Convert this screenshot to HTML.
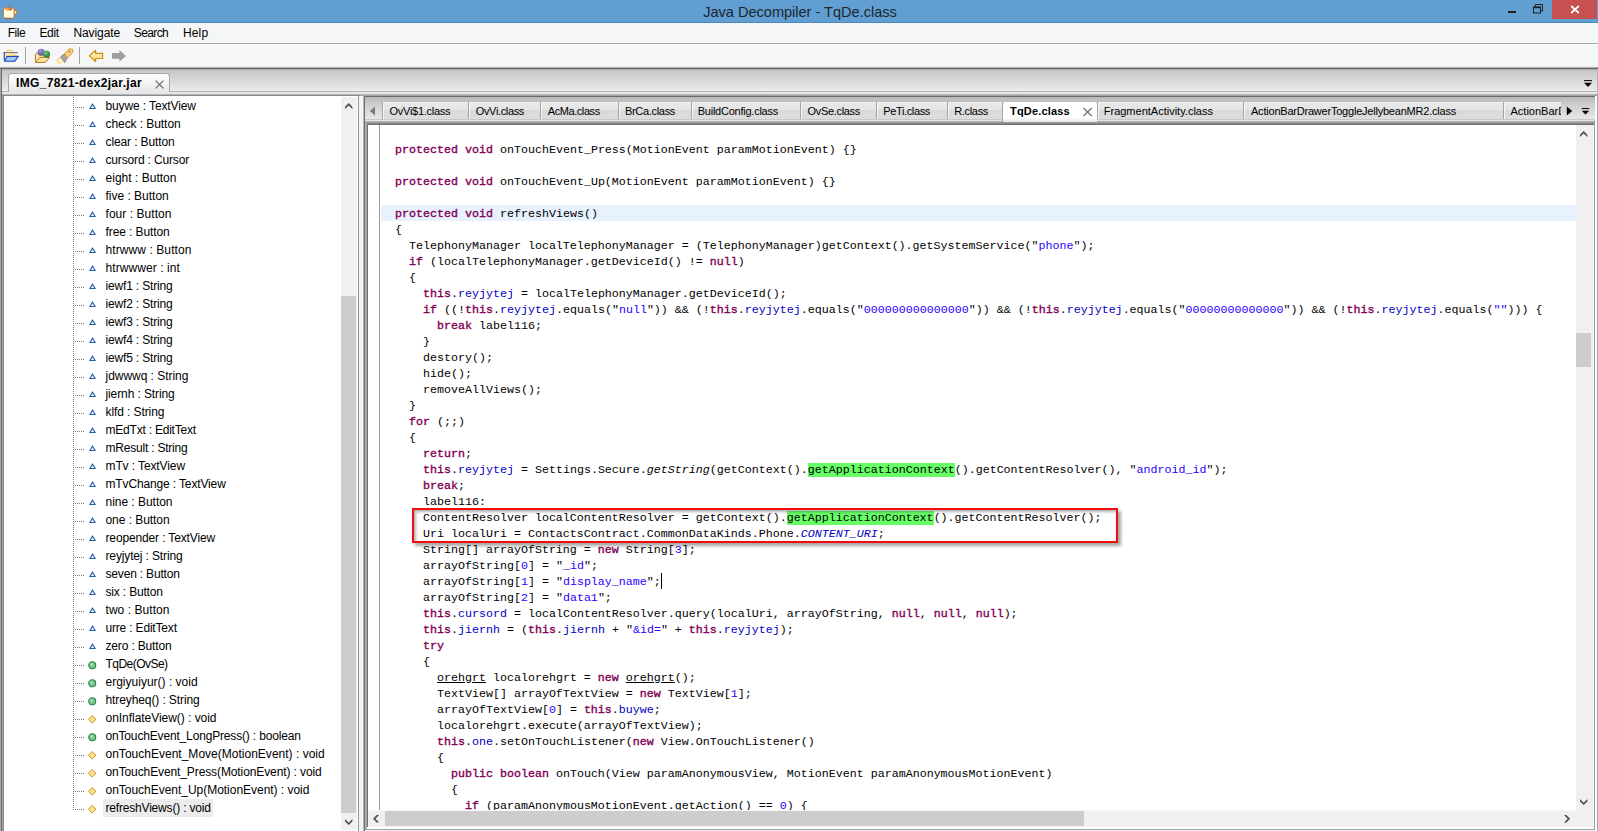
<!DOCTYPE html>
<html><head><meta charset="utf-8"><title>Java Decompiler - TqDe.class</title>
<style>
html,body{margin:0;padding:0;}
body{width:1598px;height:831px;overflow:hidden;position:relative;background:#f0f0f0;font-family:'Liberation Sans',sans-serif;}
.b{position:absolute;}
.t{position:absolute;white-space:pre;}
svg{position:absolute;overflow:visible;}
.code{position:absolute;left:381px;top:126px;width:1195px;height:684px;overflow:hidden;font:11.675px/16px 'Liberation Mono',monospace;color:#000;white-space:pre;}
.code div{height:16px;}
.k{color:#7f0055;-webkit-text-stroke:0.35px #7f0055;}
.f{color:#0000c0;}
.s{color:#2a00ff;}
.i{font-style:italic;}
.fi{color:#0000c0;font-style:italic;}
.u{text-decoration:underline;}
.g{background:#66ff66;}

</style></head>
<body>
<div class="b" style="left:0px;top:0px;width:1598px;height:23px;background:#619ed1;"></div>
<div class="b" style="left:0px;top:22px;width:1598px;height:1px;background:#4f88bd;"></div>
<svg style="left:0px;top:0px" width="24" height="24" viewBox="0 0 24 24">
<path d="M8.8 8 L7.3 6.3" stroke="#7c7c7c" stroke-width="1.1" fill="none"/>
<path d="M9.2 7.8 L11.4 4.6" stroke="#808080" stroke-width="1.5" fill="none"/>
<path d="M14 10.4 h1.4 q1.7 0 1.7 1.7 q0 1.6 -3.2 3.4 z" fill="#fff8e4" stroke="#b87a2a" stroke-width="1.1"/>
<path d="M3.5 9.2 q0 -1 1 -1 h8.6 q1 0 1 1 v6.8 q0 2.5 -2.4 2.5 h-5.8 q-2.4 0 -2.4 -2.5 z" fill="#fffbe2" stroke="#c08434" stroke-width="1"/>
<path d="M5 18.3 h7" stroke="#9a5c18" stroke-width="1"/>
<defs><linearGradient id="tea" x1="0" x2="1"><stop offset="0" stop-color="#f8c050"/><stop offset=".45" stop-color="#f49a3c"/><stop offset=".8" stop-color="#e8503a"/><stop offset="1" stop-color="#f0a060"/></linearGradient></defs>
<path d="M4.8 8.6 h7.6 v1.4 q-3.8 1.6 -7.6 0 z" fill="url(#tea)"/>
</svg>
<span class="t" style="left:703.20px;top:0.54px;font:14.6px 'Liberation Sans', sans-serif;line-height:22px;color:#1c2630;letter-spacing:-0.028px;">Java Decompiler - TqDe.class</span>
<div class="b" style="left:1508px;top:11px;width:8px;height:2px;background:#1e1e1e;"></div>
<svg style="left:1532px;top:3px" width="12" height="12" viewBox="0 0 12 12">
<path d="M3.5 3.5 v-2 h7 v6.5 h-2" fill="none" stroke="#1e1e1e" stroke-width="1"/>
<rect x="1.5" y="4" width="7" height="6" fill="none" stroke="#1e1e1e" stroke-width="1"/><path d="M1 4.5 h8" stroke="#1e1e1e" stroke-width="1.4"/></svg>
<div class="b" style="left:1552px;top:0px;width:45px;height:19px;background:#c75050;"></div>
<svg style="left:1570px;top:5px" width="10" height="9" viewBox="0 0 10 9"><path d="M1.2 1 L8.8 8 M8.8 1 L1.2 8" stroke="#fff" stroke-width="1.7" fill="none"/></svg>
<div class="b" style="left:0px;top:23px;width:1598px;height:20px;background:#f5f6f7;"></div>
<span class="t" style="left:7.70px;top:24.04px;font:12px 'Liberation Sans', sans-serif;line-height:18px;color:#000;letter-spacing:-0.461px;">File</span>
<span class="t" style="left:39.40px;top:24.04px;font:12px 'Liberation Sans', sans-serif;line-height:18px;color:#000;letter-spacing:-0.322px;">Edit</span>
<span class="t" style="left:73.50px;top:24.04px;font:12px 'Liberation Sans', sans-serif;line-height:18px;color:#000;letter-spacing:-0.109px;">Navigate</span>
<span class="t" style="left:133.80px;top:24.04px;font:12px 'Liberation Sans', sans-serif;line-height:18px;color:#000;letter-spacing:-0.605px;">Search</span>
<span class="t" style="left:183.00px;top:24.04px;font:12px 'Liberation Sans', sans-serif;line-height:18px;color:#000;letter-spacing:0.128px;">Help</span>
<div class="b" style="left:0px;top:43px;width:1598px;height:1px;background:#a5a5a5;"></div>
<div class="b" style="left:0px;top:44px;width:1598px;height:1px;background:#ffffff;"></div>
<div class="b" style="left:0px;top:45px;width:1598px;height:22px;background:#f5f6f7;"></div>
<div class="b" style="left:0px;top:66px;width:1598px;height:1px;background:#ececec;"></div>
<div class="b" style="left:0px;top:67px;width:1598px;height:1px;background:#b0b0b0;"></div>
<div class="b" style="left:0px;top:68px;width:1598px;height:1px;background:#6a6a6a;"></div>
<div class="b" style="left:25px;top:47px;width:1px;height:17px;background:#a0a0a0;"></div>
<div class="b" style="left:79px;top:47px;width:1px;height:17px;background:#a0a0a0;"></div>
<svg style="left:0px;top:44px" width="140" height="24" viewBox="0 44 140 24">
<defs>
<linearGradient id="fy" x1="0" y1="0" x2="0" y2="1"><stop offset="0" stop-color="#fff0c0"/><stop offset="1" stop-color="#f8d070"/></linearGradient>
<linearGradient id="fb" x1="0" y1="0" x2="1" y2="1"><stop offset="0" stop-color="#c4e4fc"/><stop offset="1" stop-color="#78b0f0"/></linearGradient>
<radialGradient id="sp" cx=".4" cy=".3" r=".7"><stop offset="0" stop-color="#a898dc"/><stop offset="1" stop-color="#5a4a9c"/></radialGradient>
<radialGradient id="sg" cx=".4" cy=".3" r=".7"><stop offset="0" stop-color="#78c880"/><stop offset="1" stop-color="#1c7a30"/></radialGradient>
<linearGradient id="ar" x1="0" y1="0" x2="0" y2="1"><stop offset="0" stop-color="#fff8d8"/><stop offset="1" stop-color="#fbd468"/></linearGradient>
<linearGradient id="beam" x1="1" y1="0" x2="0" y2="1"><stop offset="0" stop-color="#fff6c0"/><stop offset=".5" stop-color="#fffbe0"/><stop offset="1" stop-color="#ffe878"/></linearGradient>
</defs>
<!-- folder -->
<path d="M6.5 52.5 L7.2 50.3 H11.6 L12.3 52.5 Z" fill="#fff4d0" stroke="#e8b860" stroke-width=".8"/>
<path d="M4.6 52.8 H16.6 V57 H4.6 Z" fill="url(#fy)"/>
<path d="M3.2 52.6 H17.8" stroke="#7a6a8a" stroke-width="1"/>
<path d="M4.3 53 V60.8" stroke="#2848b8" stroke-width="1.1"/>
<path d="M7 56.6 L18.4 56.2 L14.8 61.2 H4.6 Z" fill="url(#fb)" stroke="#2444b8" stroke-width="1.1" stroke-linejoin="round"/>
<!-- package with spheres -->
<path d="M35.4 54.6 L37.6 52.2 H46 L49.4 57.4 L45.4 62.4 H35.4 Z" fill="#fbe4a4" stroke="#b87420" stroke-width="1"/>
<path d="M36 61.8 L40 57.4 H49.2" fill="none" stroke="#b87420" stroke-width="1"/>
<circle cx="41.1" cy="52.3" r="3.5" fill="url(#sp)"/>
<circle cx="46.5" cy="54.1" r="3.5" fill="url(#sg)"/>
<!-- flashlight -->
<path d="M60.8 56.8 L64.6 62.8 L57 63 L56.9 60.8 Z" fill="url(#beam)"/>
<path d="M56.9 61 L60.8 56.8" stroke="#f4b838" stroke-width="1" fill="none"/>
<path d="M57 62.8 L61.5 62.7" stroke="#ffd84a" stroke-width="1" fill="none"/>
<path d="M60.5 57 L64.6 53.6 L67.4 57.8 L64.6 62.6 Z" fill="#a8a4b0" stroke="#907c58" stroke-width=".8" stroke-linejoin="round"/>
<path d="M64.6 53.6 L69 49 L72.6 49.2 L72.8 52.6 L67.4 57.8 Z" fill="#f8d478" stroke="#e09a20" stroke-width="1" stroke-linejoin="round"/>
<path d="M69 51.2 l.8 .8" stroke="#2a50c0" stroke-width="1.2"/>
<!-- arrows -->
<path d="M89.3 55.9 L95.6 50.3 V53.3 H102.6 V58.5 H95.6 V61.5 Z" fill="url(#ar)" stroke="#d48c10" stroke-width="1.2" stroke-linejoin="round"/>
<path d="M126 55.9 L119.4 50 V53 H112 V58.8 H119.4 V61.8 Z" fill="#9e9e9e"/>
</svg>
<div class="b" style="left:0px;top:69px;width:1598px;height:762px;background:#f0f0f0;"></div>
<div class="b" style="left:0px;top:69px;width:1px;height:762px;background:#a8a8a8;"></div>
<div class="b" style="left:1px;top:69px;width:1px;height:762px;background:#6a6a6a;"></div>
<div class="b" style="left:2px;top:69px;width:1595px;height:1px;background:#a8a8a8;"></div>
<div class="b" style="left:2px;top:70px;width:1595px;height:21px;background:linear-gradient(#c6c6c6,#ececec);"></div>
<div class="b" style="left:1597px;top:69px;width:1px;height:24px;background:#b0b0b0;"></div>
<div class="b" style="left:2px;top:91px;width:1596px;height:1px;background:#b4b4b4;"></div>
<div class="b" style="left:2px;top:92px;width:1596px;height:2px;background:#e6e6e6;"></div>
<div class="b" style="left:2px;top:94px;width:1596px;height:1px;background:#b6b6b6;"></div>
<div class="b" style="left:2px;top:95px;width:357px;height:1px;background:#858a94;"></div>
<div class="b" style="left:359px;top:95px;width:1238px;height:1px;background:#a2a2a2;"></div>
<div class="b" style="left:8px;top:73px;width:162px;height:19px;background:linear-gradient(#fdfdfd,#f3f3f3 55%,#e6e6e6);border:1px solid #a8a8a8;border-bottom:none;border-radius:4px 4px 0 0;box-sizing:border-box;"></div>
<span class="t" style="left:16.00px;top:73.84px;font:bold 12px 'Liberation Sans', sans-serif;line-height:18px;color:#000;letter-spacing:0.329px;">IMG_7821-dex2jar.jar</span>
<svg style="left:154px;top:78.7px" width="11" height="11" viewBox="0 0 11 11"><path d="M1.6 1.6 L9.4 9.4 M9.4 1.6 L1.6 9.4" stroke="#6a6a6a" stroke-width="1.25" fill="none"/></svg>
<svg style="left:1583px;top:80px" width="10" height="8" viewBox="0 0 10 8"><path d="M1 .6 h8" stroke="#000" stroke-width="1"/><path d="M1 2.8 h8 l-4 4.2z" fill="#000"/></svg>
<div class="b" style="left:2px;top:96px;width:1px;height:735px;background:#a2a2a2;"></div>
<div class="b" style="left:3px;top:96px;width:1px;height:735px;background:#878c96;"></div>
<div class="b" style="left:4px;top:96px;width:354px;height:735px;background:#ffffff;"></div>
<div class="b" style="left:341px;top:97px;width:16px;height:733px;background:#f0f0f0;"></div>
<div class="b" style="left:357px;top:96px;width:1px;height:735px;background:#ffffff;"></div>
<div class="b" style="left:341px;top:296px;width:15px;height:517px;background:#cdcdcd;"></div>
<div class="b" style="left:358px;top:96px;width:1px;height:735px;background:#8a93a0;"></div>
<div class="b" style="left:359px;top:96px;width:4px;height:735px;background:#f4f4f4;"></div>
<svg style="left:344.8px;top:103px" width="8" height="7" viewBox="0 0 8 7"><path d="M0 3.7 L3.7 0 L7.4 3.7 V6.1 L3.7 2.4 L0 6.1 Z" fill="#505050"/></svg>
<svg style="left:344.8px;top:819px" width="8" height="7" viewBox="0 0 8 7"><path d="M0 2.4 L3.7 6.1 L7.4 2.4 V0 L3.7 3.7 L0 0 Z" fill="#505050"/></svg>
<div class="b" style="left:363px;top:96px;width:1px;height:735px;background:#b8b8b8;"></div>
<div class="b" style="left:364px;top:96px;width:1px;height:735px;background:#707070;"></div>
<div class="b" style="left:364px;top:96px;width:1231px;height:1px;background:#6c6c6c;"></div>
<div class="b" style="left:365px;top:97px;width:1230px;height:23px;background:linear-gradient(#b8b8b8,#cfcfcf 35%,#e8e8e8);"></div>
<div class="b" style="left:1594px;top:120px;width:1px;height:711px;background:#a0a0a0;"></div>
<div class="b" style="left:1595px;top:96px;width:2px;height:735px;background:#fafafa;"></div>
<div class="b" style="left:1597px;top:93px;width:1px;height:738px;background:#a8a8a8;"></div>
<div class="b" style="left:365px;top:119px;width:1229px;height:1px;background:#c8c8c8;"></div>
<div class="b" style="left:365px;top:120px;width:1229px;height:1px;background:#e4e4e4;"></div>
<div class="b" style="left:365px;top:121px;width:1229px;height:1px;background:#b4b4b4;"></div>
<div class="b" style="left:365px;top:122px;width:1229px;height:1px;background:#9a9a9a;"></div>
<div class="b" style="left:365px;top:123px;width:1229px;height:1px;background:#888888;"></div>
<div class="b" style="left:365px;top:124px;width:1229px;height:1px;background:#707070;"></div>
<div class="b" style="left:365px;top:123px;width:2px;height:708px;background:#ababab;"></div>
<div class="b" style="left:367px;top:124px;width:1px;height:706px;background:#6e6e6e;"></div>
<div class="b" style="left:368px;top:125px;width:1208px;height:686px;background:#ffffff;"></div>
<div class="b" style="left:379px;top:125px;width:1px;height:685px;background:#9a9a9a;"></div>
<div class="b" style="left:1576px;top:125px;width:17px;height:702px;background:#f0f0f0;"></div>
<div class="b" style="left:368px;top:811px;width:1225px;height:16px;background:#f0f0f0;"></div>
<div class="b" style="left:368px;top:810px;width:1208px;height:1px;background:#f8f8f8;"></div>
<div class="b" style="left:1576px;top:333px;width:15px;height:34px;background:#cdcdcd;"></div>
<div class="b" style="left:385px;top:811px;width:699px;height:15px;background:#cdcdcd;"></div>
<div class="b" style="left:1593px;top:125px;width:1px;height:703px;background:#ffffff;"></div>
<div class="b" style="left:367px;top:827px;width:1227px;height:2px;background:#ffffff;"></div>
<div class="b" style="left:365px;top:829px;width:1230px;height:1px;background:#a0a0a0;"></div>
<div class="b" style="left:365px;top:830px;width:1230px;height:1px;background:#f0f0f0;"></div>
<svg style="left:1579.5px;top:130.8px" width="8" height="7" viewBox="0 0 8 7"><path d="M0 3.7 L3.7 0 L7.4 3.7 V6.1 L3.7 2.4 L0 6.1 Z" fill="#505050"/></svg>
<svg style="left:1579.5px;top:798.8px" width="8" height="7" viewBox="0 0 8 7"><path d="M0 2.4 L3.7 6.1 L7.4 2.4 V0 L3.7 3.7 L0 0 Z" fill="#505050"/></svg>
<svg style="left:373px;top:814.9px" width="7" height="8" viewBox="0 0 7 8"><path d="M3.7 0 L0 3.7 L3.7 7.4 H6.1 L2.4 3.7 L6.1 0 Z" fill="#505050"/></svg>
<svg style="left:1563.7px;top:814.9px" width="7" height="8" viewBox="0 0 7 8"><path d="M2.4 0 L6.1 3.7 L2.4 7.4 H0 L3.7 3.7 L0 0 Z" fill="#505050"/></svg>
<div class="b" style="left:382px;top:101px;width:86px;height:18px;background:linear-gradient(#e9e9e9 0,#e5e5e5 46%,#d9d9d9 46%,#dddddd 100%);border-left:1px solid #a4a4a4;border-top:1px solid #bdbdbd;box-shadow:inset 1px 1px 0 #f6f6f6;box-sizing:border-box;border-radius:2px 0 0 0;"></div>
<span class="t" style="left:389.50px;top:103.19px;font:11px 'Liberation Sans', sans-serif;line-height:16px;color:#000;letter-spacing:-0.271px;">OvVi$1.class</span>
<div class="b" style="left:468px;top:101px;width:72px;height:18px;background:linear-gradient(#e9e9e9 0,#e5e5e5 46%,#d9d9d9 46%,#dddddd 100%);border-left:1px solid #a4a4a4;border-top:1px solid #bdbdbd;box-shadow:inset 1px 1px 0 #f6f6f6;box-sizing:border-box;border-radius:2px 0 0 0;"></div>
<span class="t" style="left:475.75px;top:103.19px;font:11px 'Liberation Sans', sans-serif;line-height:16px;color:#000;letter-spacing:-0.352px;">OvVi.class</span>
<div class="b" style="left:540px;top:101px;width:78px;height:18px;background:linear-gradient(#e9e9e9 0,#e5e5e5 46%,#d9d9d9 46%,#dddddd 100%);border-left:1px solid #a4a4a4;border-top:1px solid #bdbdbd;box-shadow:inset 1px 1px 0 #f6f6f6;box-sizing:border-box;border-radius:2px 0 0 0;"></div>
<span class="t" style="left:547.75px;top:103.19px;font:11px 'Liberation Sans', sans-serif;line-height:16px;color:#000;letter-spacing:-0.425px;">AcMa.class</span>
<div class="b" style="left:618px;top:101px;width:73px;height:18px;background:linear-gradient(#e9e9e9 0,#e5e5e5 46%,#d9d9d9 46%,#dddddd 100%);border-left:1px solid #a4a4a4;border-top:1px solid #bdbdbd;box-shadow:inset 1px 1px 0 #f6f6f6;box-sizing:border-box;border-radius:2px 0 0 0;"></div>
<span class="t" style="left:625.00px;top:103.19px;font:11px 'Liberation Sans', sans-serif;line-height:16px;color:#000;letter-spacing:-0.319px;">BrCa.class</span>
<div class="b" style="left:691px;top:101px;width:109px;height:18px;background:linear-gradient(#e9e9e9 0,#e5e5e5 46%,#d9d9d9 46%,#dddddd 100%);border-left:1px solid #a4a4a4;border-top:1px solid #bdbdbd;box-shadow:inset 1px 1px 0 #f6f6f6;box-sizing:border-box;border-radius:2px 0 0 0;"></div>
<span class="t" style="left:697.75px;top:103.19px;font:11px 'Liberation Sans', sans-serif;line-height:16px;color:#000;letter-spacing:-0.243px;">BuildConfig.class</span>
<div class="b" style="left:800px;top:101px;width:76px;height:18px;background:linear-gradient(#e9e9e9 0,#e5e5e5 46%,#d9d9d9 46%,#dddddd 100%);border-left:1px solid #a4a4a4;border-top:1px solid #bdbdbd;box-shadow:inset 1px 1px 0 #f6f6f6;box-sizing:border-box;border-radius:2px 0 0 0;"></div>
<span class="t" style="left:807.50px;top:103.19px;font:11px 'Liberation Sans', sans-serif;line-height:16px;color:#000;letter-spacing:-0.314px;">OvSe.class</span>
<div class="b" style="left:876px;top:101px;width:71px;height:18px;background:linear-gradient(#e9e9e9 0,#e5e5e5 46%,#d9d9d9 46%,#dddddd 100%);border-left:1px solid #a4a4a4;border-top:1px solid #bdbdbd;box-shadow:inset 1px 1px 0 #f6f6f6;box-sizing:border-box;border-radius:2px 0 0 0;"></div>
<span class="t" style="left:883.25px;top:103.19px;font:11px 'Liberation Sans', sans-serif;line-height:16px;color:#000;letter-spacing:-0.358px;">PeTi.class</span>
<div class="b" style="left:947px;top:101px;width:55px;height:18px;background:linear-gradient(#e9e9e9 0,#e5e5e5 46%,#d9d9d9 46%,#dddddd 100%);border-left:1px solid #a4a4a4;border-top:1px solid #bdbdbd;box-shadow:inset 1px 1px 0 #f6f6f6;box-sizing:border-box;border-radius:2px 0 0 0;"></div>
<span class="t" style="left:954.25px;top:103.19px;font:11px 'Liberation Sans', sans-serif;line-height:16px;color:#000;letter-spacing:-0.330px;">R.class</span>
<div class="b" style="left:1002px;top:101px;width:95px;height:21px;background:linear-gradient(#ffffff 78%,#e6e6e6);border-left:1px solid #a4a4a4;border-top:1px solid #bdbdbd;box-sizing:border-box;border-radius:3px 3px 0 0;"></div>
<span class="t" style="left:1010.00px;top:103.19px;font:bold 11px 'Liberation Sans', sans-serif;line-height:16px;color:#000;letter-spacing:0.171px;">TqDe.class</span>
<div class="b" style="left:1097px;top:101px;width:146px;height:18px;background:linear-gradient(#e9e9e9 0,#e5e5e5 46%,#d9d9d9 46%,#dddddd 100%);border-left:1px solid #a4a4a4;border-top:1px solid #bdbdbd;box-shadow:inset 1px 1px 0 #f6f6f6;box-sizing:border-box;border-radius:2px 0 0 0;"></div>
<span class="t" style="left:1103.75px;top:103.19px;font:11px 'Liberation Sans', sans-serif;line-height:16px;color:#000;letter-spacing:0.001px;">FragmentActivity.class</span>
<div class="b" style="left:1243px;top:101px;width:260px;height:18px;background:linear-gradient(#e9e9e9 0,#e5e5e5 46%,#d9d9d9 46%,#dddddd 100%);border-left:1px solid #a4a4a4;border-top:1px solid #bdbdbd;box-shadow:inset 1px 1px 0 #f6f6f6;box-sizing:border-box;border-radius:2px 0 0 0;"></div>
<span class="t" style="left:1251.00px;top:103.19px;font:11px 'Liberation Sans', sans-serif;line-height:16px;color:#000;letter-spacing:-0.215px;">ActionBarDrawerToggleJellybeanMR2.class</span>
<div class="b" style="left:1503px;top:97px;width:58px;height:23px;overflow:hidden">
<div class="b" style="left:0px;top:4px;width:90px;height:18px;background:linear-gradient(#e9e9e9 0,#e5e5e5 46%,#d9d9d9 46%,#dddddd 100%);border-left:1px solid #a4a4a4;border-top:1px solid #bdbdbd;box-shadow:inset 1px 1px 0 #f6f6f6;box-sizing:border-box;border-radius:2px 0 0 0;"></div>
<span class="t" style="left:7.50px;top:6.19px;font:11px 'Liberation Sans', sans-serif;line-height:16px;color:#000;">ActionBarDrawerToggle</span>
</div>
<svg style="left:1082px;top:107px" width="11" height="10" viewBox="0 0 11 10"><path d="M1.4 1 L9.8 9 M9.8 1 L1.4 9" stroke="#6a6a6a" stroke-width="1.15" fill="none"/></svg>
<svg style="left:369px;top:105.5px" width="7" height="10" viewBox="0 0 7 10"><path d="M6 .5 V9.5 L.9 5z" fill="#7a7a7a"/></svg>
<svg style="left:1566px;top:106px" width="7" height="10" viewBox="0 0 7 10"><path d="M.8 .5 V9.5 L6.2 5z" fill="#000"/></svg>
<svg style="left:1581px;top:108px" width="9" height="7" viewBox="0 0 9 7"><path d="M.8 .6 h7.4" stroke="#000" stroke-width="1"/><path d="M.8 2.7 h7.4 l-3.7 3.9z" fill="#000"/></svg>
<div class="b" style="left:73px;top:97px;width:1px;height:713px;background:repeating-linear-gradient(#7a7a7a 0 1px,transparent 1px 2px);"></div>
<div class="b" style="left:103px;top:799px;width:110px;height:18px;background:#ececec;"></div>
<div class="b" style="left:74px;top:107px;width:11px;height:1px;background:repeating-linear-gradient(90deg,transparent 0 1px,#7a7a7a 1px 2px);"></div>
<svg style="left:89px;top:103px" width="7" height="6" viewBox="0 0 7 6"><path d="M3.5 0 L7 6 H0 Z" fill="#1f5fa6"/><path d="M3.5 2.2 L5.1 5 H1.9 Z" fill="#fff"/></svg>
<span class="t" style="left:105.50px;top:97.44px;font:12px 'Liberation Sans', sans-serif;line-height:18px;color:#000;letter-spacing:-0.118px;">buywe : TextView</span>
<div class="b" style="left:74px;top:125px;width:11px;height:1px;background:repeating-linear-gradient(90deg,transparent 0 1px,#7a7a7a 1px 2px);"></div>
<svg style="left:89px;top:121px" width="7" height="6" viewBox="0 0 7 6"><path d="M3.5 0 L7 6 H0 Z" fill="#1f5fa6"/><path d="M3.5 2.2 L5.1 5 H1.9 Z" fill="#fff"/></svg>
<span class="t" style="left:105.50px;top:115.44px;font:12px 'Liberation Sans', sans-serif;line-height:18px;color:#000;letter-spacing:-0.068px;">check : Button</span>
<div class="b" style="left:74px;top:143px;width:11px;height:1px;background:repeating-linear-gradient(90deg,transparent 0 1px,#7a7a7a 1px 2px);"></div>
<svg style="left:89px;top:139px" width="7" height="6" viewBox="0 0 7 6"><path d="M3.5 0 L7 6 H0 Z" fill="#1f5fa6"/><path d="M3.5 2.2 L5.1 5 H1.9 Z" fill="#fff"/></svg>
<span class="t" style="left:105.50px;top:133.44px;font:12px 'Liberation Sans', sans-serif;line-height:18px;color:#000;letter-spacing:-0.116px;">clear : Button</span>
<div class="b" style="left:74px;top:161px;width:11px;height:1px;background:repeating-linear-gradient(90deg,transparent 0 1px,#7a7a7a 1px 2px);"></div>
<svg style="left:89px;top:157px" width="7" height="6" viewBox="0 0 7 6"><path d="M3.5 0 L7 6 H0 Z" fill="#1f5fa6"/><path d="M3.5 2.2 L5.1 5 H1.9 Z" fill="#fff"/></svg>
<span class="t" style="left:105.50px;top:151.44px;font:12px 'Liberation Sans', sans-serif;line-height:18px;color:#000;letter-spacing:-0.158px;">cursord : Cursor</span>
<div class="b" style="left:74px;top:179px;width:11px;height:1px;background:repeating-linear-gradient(90deg,transparent 0 1px,#7a7a7a 1px 2px);"></div>
<svg style="left:89px;top:175px" width="7" height="6" viewBox="0 0 7 6"><path d="M3.5 0 L7 6 H0 Z" fill="#1f5fa6"/><path d="M3.5 2.2 L5.1 5 H1.9 Z" fill="#fff"/></svg>
<span class="t" style="left:105.50px;top:169.44px;font:12px 'Liberation Sans', sans-serif;line-height:18px;color:#000;letter-spacing:0.020px;">eight : Button</span>
<div class="b" style="left:74px;top:197px;width:11px;height:1px;background:repeating-linear-gradient(90deg,transparent 0 1px,#7a7a7a 1px 2px);"></div>
<svg style="left:89px;top:193px" width="7" height="6" viewBox="0 0 7 6"><path d="M3.5 0 L7 6 H0 Z" fill="#1f5fa6"/><path d="M3.5 2.2 L5.1 5 H1.9 Z" fill="#fff"/></svg>
<span class="t" style="left:105.50px;top:187.44px;font:12px 'Liberation Sans', sans-serif;line-height:18px;color:#000;letter-spacing:-0.013px;">five : Button</span>
<div class="b" style="left:74px;top:215px;width:11px;height:1px;background:repeating-linear-gradient(90deg,transparent 0 1px,#7a7a7a 1px 2px);"></div>
<svg style="left:89px;top:211px" width="7" height="6" viewBox="0 0 7 6"><path d="M3.5 0 L7 6 H0 Z" fill="#1f5fa6"/><path d="M3.5 2.2 L5.1 5 H1.9 Z" fill="#fff"/></svg>
<span class="t" style="left:105.50px;top:205.44px;font:12px 'Liberation Sans', sans-serif;line-height:18px;color:#000;letter-spacing:0.048px;">four : Button</span>
<div class="b" style="left:74px;top:233px;width:11px;height:1px;background:repeating-linear-gradient(90deg,transparent 0 1px,#7a7a7a 1px 2px);"></div>
<svg style="left:89px;top:229px" width="7" height="6" viewBox="0 0 7 6"><path d="M3.5 0 L7 6 H0 Z" fill="#1f5fa6"/><path d="M3.5 2.2 L5.1 5 H1.9 Z" fill="#fff"/></svg>
<span class="t" style="left:105.50px;top:223.44px;font:12px 'Liberation Sans', sans-serif;line-height:18px;color:#000;letter-spacing:-0.098px;">free : Button</span>
<div class="b" style="left:74px;top:251px;width:11px;height:1px;background:repeating-linear-gradient(90deg,transparent 0 1px,#7a7a7a 1px 2px);"></div>
<svg style="left:89px;top:247px" width="7" height="6" viewBox="0 0 7 6"><path d="M3.5 0 L7 6 H0 Z" fill="#1f5fa6"/><path d="M3.5 2.2 L5.1 5 H1.9 Z" fill="#fff"/></svg>
<span class="t" style="left:105.50px;top:241.44px;font:12px 'Liberation Sans', sans-serif;line-height:18px;color:#000;letter-spacing:0.086px;">htrwww : Button</span>
<div class="b" style="left:74px;top:269px;width:11px;height:1px;background:repeating-linear-gradient(90deg,transparent 0 1px,#7a7a7a 1px 2px);"></div>
<svg style="left:89px;top:265px" width="7" height="6" viewBox="0 0 7 6"><path d="M3.5 0 L7 6 H0 Z" fill="#1f5fa6"/><path d="M3.5 2.2 L5.1 5 H1.9 Z" fill="#fff"/></svg>
<span class="t" style="left:105.50px;top:259.44px;font:12px 'Liberation Sans', sans-serif;line-height:18px;color:#000;letter-spacing:0.081px;">htrwwwer : int</span>
<div class="b" style="left:74px;top:287px;width:11px;height:1px;background:repeating-linear-gradient(90deg,transparent 0 1px,#7a7a7a 1px 2px);"></div>
<svg style="left:89px;top:283px" width="7" height="6" viewBox="0 0 7 6"><path d="M3.5 0 L7 6 H0 Z" fill="#1f5fa6"/><path d="M3.5 2.2 L5.1 5 H1.9 Z" fill="#fff"/></svg>
<span class="t" style="left:105.50px;top:277.44px;font:12px 'Liberation Sans', sans-serif;line-height:18px;color:#000;letter-spacing:-0.170px;">iewf1 : String</span>
<div class="b" style="left:74px;top:305px;width:11px;height:1px;background:repeating-linear-gradient(90deg,transparent 0 1px,#7a7a7a 1px 2px);"></div>
<svg style="left:89px;top:301px" width="7" height="6" viewBox="0 0 7 6"><path d="M3.5 0 L7 6 H0 Z" fill="#1f5fa6"/><path d="M3.5 2.2 L5.1 5 H1.9 Z" fill="#fff"/></svg>
<span class="t" style="left:105.50px;top:295.44px;font:12px 'Liberation Sans', sans-serif;line-height:18px;color:#000;letter-spacing:-0.170px;">iewf2 : String</span>
<div class="b" style="left:74px;top:323px;width:11px;height:1px;background:repeating-linear-gradient(90deg,transparent 0 1px,#7a7a7a 1px 2px);"></div>
<svg style="left:89px;top:319px" width="7" height="6" viewBox="0 0 7 6"><path d="M3.5 0 L7 6 H0 Z" fill="#1f5fa6"/><path d="M3.5 2.2 L5.1 5 H1.9 Z" fill="#fff"/></svg>
<span class="t" style="left:105.50px;top:313.44px;font:12px 'Liberation Sans', sans-serif;line-height:18px;color:#000;letter-spacing:-0.170px;">iewf3 : String</span>
<div class="b" style="left:74px;top:341px;width:11px;height:1px;background:repeating-linear-gradient(90deg,transparent 0 1px,#7a7a7a 1px 2px);"></div>
<svg style="left:89px;top:337px" width="7" height="6" viewBox="0 0 7 6"><path d="M3.5 0 L7 6 H0 Z" fill="#1f5fa6"/><path d="M3.5 2.2 L5.1 5 H1.9 Z" fill="#fff"/></svg>
<span class="t" style="left:105.50px;top:331.44px;font:12px 'Liberation Sans', sans-serif;line-height:18px;color:#000;letter-spacing:-0.170px;">iewf4 : String</span>
<div class="b" style="left:74px;top:359px;width:11px;height:1px;background:repeating-linear-gradient(90deg,transparent 0 1px,#7a7a7a 1px 2px);"></div>
<svg style="left:89px;top:355px" width="7" height="6" viewBox="0 0 7 6"><path d="M3.5 0 L7 6 H0 Z" fill="#1f5fa6"/><path d="M3.5 2.2 L5.1 5 H1.9 Z" fill="#fff"/></svg>
<span class="t" style="left:105.50px;top:349.44px;font:12px 'Liberation Sans', sans-serif;line-height:18px;color:#000;letter-spacing:-0.170px;">iewf5 : String</span>
<div class="b" style="left:74px;top:377px;width:11px;height:1px;background:repeating-linear-gradient(90deg,transparent 0 1px,#7a7a7a 1px 2px);"></div>
<svg style="left:89px;top:373px" width="7" height="6" viewBox="0 0 7 6"><path d="M3.5 0 L7 6 H0 Z" fill="#1f5fa6"/><path d="M3.5 2.2 L5.1 5 H1.9 Z" fill="#fff"/></svg>
<span class="t" style="left:105.50px;top:367.44px;font:12px 'Liberation Sans', sans-serif;line-height:18px;color:#000;letter-spacing:-0.032px;">jdwwwq : String</span>
<div class="b" style="left:74px;top:395px;width:11px;height:1px;background:repeating-linear-gradient(90deg,transparent 0 1px,#7a7a7a 1px 2px);"></div>
<svg style="left:89px;top:391px" width="7" height="6" viewBox="0 0 7 6"><path d="M3.5 0 L7 6 H0 Z" fill="#1f5fa6"/><path d="M3.5 2.2 L5.1 5 H1.9 Z" fill="#fff"/></svg>
<span class="t" style="left:105.50px;top:385.44px;font:12px 'Liberation Sans', sans-serif;line-height:18px;color:#000;letter-spacing:-0.107px;">jiernh : String</span>
<div class="b" style="left:74px;top:413px;width:11px;height:1px;background:repeating-linear-gradient(90deg,transparent 0 1px,#7a7a7a 1px 2px);"></div>
<svg style="left:89px;top:409px" width="7" height="6" viewBox="0 0 7 6"><path d="M3.5 0 L7 6 H0 Z" fill="#1f5fa6"/><path d="M3.5 2.2 L5.1 5 H1.9 Z" fill="#fff"/></svg>
<span class="t" style="left:105.50px;top:403.44px;font:12px 'Liberation Sans', sans-serif;line-height:18px;color:#000;letter-spacing:-0.095px;">klfd : String</span>
<div class="b" style="left:74px;top:431px;width:11px;height:1px;background:repeating-linear-gradient(90deg,transparent 0 1px,#7a7a7a 1px 2px);"></div>
<svg style="left:89px;top:427px" width="7" height="6" viewBox="0 0 7 6"><path d="M3.5 0 L7 6 H0 Z" fill="#1f5fa6"/><path d="M3.5 2.2 L5.1 5 H1.9 Z" fill="#fff"/></svg>
<span class="t" style="left:105.50px;top:421.44px;font:12px 'Liberation Sans', sans-serif;line-height:18px;color:#000;letter-spacing:-0.214px;">mEdTxt : EditText</span>
<div class="b" style="left:74px;top:449px;width:11px;height:1px;background:repeating-linear-gradient(90deg,transparent 0 1px,#7a7a7a 1px 2px);"></div>
<svg style="left:89px;top:445px" width="7" height="6" viewBox="0 0 7 6"><path d="M3.5 0 L7 6 H0 Z" fill="#1f5fa6"/><path d="M3.5 2.2 L5.1 5 H1.9 Z" fill="#fff"/></svg>
<span class="t" style="left:105.50px;top:439.44px;font:12px 'Liberation Sans', sans-serif;line-height:18px;color:#000;letter-spacing:-0.210px;">mResult : String</span>
<div class="b" style="left:74px;top:467px;width:11px;height:1px;background:repeating-linear-gradient(90deg,transparent 0 1px,#7a7a7a 1px 2px);"></div>
<svg style="left:89px;top:463px" width="7" height="6" viewBox="0 0 7 6"><path d="M3.5 0 L7 6 H0 Z" fill="#1f5fa6"/><path d="M3.5 2.2 L5.1 5 H1.9 Z" fill="#fff"/></svg>
<span class="t" style="left:105.50px;top:457.44px;font:12px 'Liberation Sans', sans-serif;line-height:18px;color:#000;letter-spacing:-0.102px;">mTv : TextView</span>
<div class="b" style="left:74px;top:485px;width:11px;height:1px;background:repeating-linear-gradient(90deg,transparent 0 1px,#7a7a7a 1px 2px);"></div>
<svg style="left:89px;top:481px" width="7" height="6" viewBox="0 0 7 6"><path d="M3.5 0 L7 6 H0 Z" fill="#1f5fa6"/><path d="M3.5 2.2 L5.1 5 H1.9 Z" fill="#fff"/></svg>
<span class="t" style="left:105.50px;top:475.44px;font:12px 'Liberation Sans', sans-serif;line-height:18px;color:#000;letter-spacing:-0.138px;">mTvChange : TextView</span>
<div class="b" style="left:74px;top:503px;width:11px;height:1px;background:repeating-linear-gradient(90deg,transparent 0 1px,#7a7a7a 1px 2px);"></div>
<svg style="left:89px;top:499px" width="7" height="6" viewBox="0 0 7 6"><path d="M3.5 0 L7 6 H0 Z" fill="#1f5fa6"/><path d="M3.5 2.2 L5.1 5 H1.9 Z" fill="#fff"/></svg>
<span class="t" style="left:105.50px;top:493.44px;font:12px 'Liberation Sans', sans-serif;line-height:18px;color:#000;letter-spacing:-0.030px;">nine : Button</span>
<div class="b" style="left:74px;top:521px;width:11px;height:1px;background:repeating-linear-gradient(90deg,transparent 0 1px,#7a7a7a 1px 2px);"></div>
<svg style="left:89px;top:517px" width="7" height="6" viewBox="0 0 7 6"><path d="M3.5 0 L7 6 H0 Z" fill="#1f5fa6"/><path d="M3.5 2.2 L5.1 5 H1.9 Z" fill="#fff"/></svg>
<span class="t" style="left:105.50px;top:511.44px;font:12px 'Liberation Sans', sans-serif;line-height:18px;color:#000;letter-spacing:-0.052px;">one : Button</span>
<div class="b" style="left:74px;top:539px;width:11px;height:1px;background:repeating-linear-gradient(90deg,transparent 0 1px,#7a7a7a 1px 2px);"></div>
<svg style="left:89px;top:535px" width="7" height="6" viewBox="0 0 7 6"><path d="M3.5 0 L7 6 H0 Z" fill="#1f5fa6"/><path d="M3.5 2.2 L5.1 5 H1.9 Z" fill="#fff"/></svg>
<span class="t" style="left:105.50px;top:529.44px;font:12px 'Liberation Sans', sans-serif;line-height:18px;color:#000;letter-spacing:-0.140px;">reopender : TextView</span>
<div class="b" style="left:74px;top:557px;width:11px;height:1px;background:repeating-linear-gradient(90deg,transparent 0 1px,#7a7a7a 1px 2px);"></div>
<svg style="left:89px;top:553px" width="7" height="6" viewBox="0 0 7 6"><path d="M3.5 0 L7 6 H0 Z" fill="#1f5fa6"/><path d="M3.5 2.2 L5.1 5 H1.9 Z" fill="#fff"/></svg>
<span class="t" style="left:105.50px;top:547.44px;font:12px 'Liberation Sans', sans-serif;line-height:18px;color:#000;letter-spacing:-0.139px;">reyjytej : String</span>
<div class="b" style="left:74px;top:575px;width:11px;height:1px;background:repeating-linear-gradient(90deg,transparent 0 1px,#7a7a7a 1px 2px);"></div>
<svg style="left:89px;top:571px" width="7" height="6" viewBox="0 0 7 6"><path d="M3.5 0 L7 6 H0 Z" fill="#1f5fa6"/><path d="M3.5 2.2 L5.1 5 H1.9 Z" fill="#fff"/></svg>
<span class="t" style="left:105.50px;top:565.44px;font:12px 'Liberation Sans', sans-serif;line-height:18px;color:#000;letter-spacing:-0.180px;">seven : Button</span>
<div class="b" style="left:74px;top:593px;width:11px;height:1px;background:repeating-linear-gradient(90deg,transparent 0 1px,#7a7a7a 1px 2px);"></div>
<svg style="left:89px;top:589px" width="7" height="6" viewBox="0 0 7 6"><path d="M3.5 0 L7 6 H0 Z" fill="#1f5fa6"/><path d="M3.5 2.2 L5.1 5 H1.9 Z" fill="#fff"/></svg>
<span class="t" style="left:105.50px;top:583.44px;font:12px 'Liberation Sans', sans-serif;line-height:18px;color:#000;letter-spacing:-0.173px;">six : Button</span>
<div class="b" style="left:74px;top:611px;width:11px;height:1px;background:repeating-linear-gradient(90deg,transparent 0 1px,#7a7a7a 1px 2px);"></div>
<svg style="left:89px;top:607px" width="7" height="6" viewBox="0 0 7 6"><path d="M3.5 0 L7 6 H0 Z" fill="#1f5fa6"/><path d="M3.5 2.2 L5.1 5 H1.9 Z" fill="#fff"/></svg>
<span class="t" style="left:105.50px;top:601.44px;font:12px 'Liberation Sans', sans-serif;line-height:18px;color:#000;letter-spacing:0.060px;">two : Button</span>
<div class="b" style="left:74px;top:629px;width:11px;height:1px;background:repeating-linear-gradient(90deg,transparent 0 1px,#7a7a7a 1px 2px);"></div>
<svg style="left:89px;top:625px" width="7" height="6" viewBox="0 0 7 6"><path d="M3.5 0 L7 6 H0 Z" fill="#1f5fa6"/><path d="M3.5 2.2 L5.1 5 H1.9 Z" fill="#fff"/></svg>
<span class="t" style="left:105.50px;top:619.44px;font:12px 'Liberation Sans', sans-serif;line-height:18px;color:#000;letter-spacing:-0.182px;">urre : EditText</span>
<div class="b" style="left:74px;top:647px;width:11px;height:1px;background:repeating-linear-gradient(90deg,transparent 0 1px,#7a7a7a 1px 2px);"></div>
<svg style="left:89px;top:643px" width="7" height="6" viewBox="0 0 7 6"><path d="M3.5 0 L7 6 H0 Z" fill="#1f5fa6"/><path d="M3.5 2.2 L5.1 5 H1.9 Z" fill="#fff"/></svg>
<span class="t" style="left:105.50px;top:637.44px;font:12px 'Liberation Sans', sans-serif;line-height:18px;color:#000;letter-spacing:-0.157px;">zero : Button</span>
<div class="b" style="left:74px;top:665px;width:11px;height:1px;background:repeating-linear-gradient(90deg,transparent 0 1px,#7a7a7a 1px 2px);"></div>
<svg style="left:88px;top:661px" width="9" height="9" viewBox="0 0 9 9"><circle cx="4.2" cy="4.3" r="3.5" fill="#7fc08a" stroke="#1f8a4c" stroke-width="1.1"/><circle cx="3.6" cy="3.7" r="1.6" fill="#a4d8a8"/></svg>
<span class="t" style="left:105.50px;top:655.44px;font:12px 'Liberation Sans', sans-serif;line-height:18px;color:#000;letter-spacing:-0.526px;">TqDe(OvSe)</span>
<div class="b" style="left:74px;top:683px;width:11px;height:1px;background:repeating-linear-gradient(90deg,transparent 0 1px,#7a7a7a 1px 2px);"></div>
<svg style="left:88px;top:679px" width="9" height="9" viewBox="0 0 9 9"><circle cx="4.2" cy="4.3" r="3.5" fill="#7fc08a" stroke="#1f8a4c" stroke-width="1.1"/><circle cx="3.6" cy="3.7" r="1.6" fill="#a4d8a8"/></svg>
<span class="t" style="left:105.50px;top:673.44px;font:12px 'Liberation Sans', sans-serif;line-height:18px;color:#000;letter-spacing:0.004px;">ergiyuiyur() : void</span>
<div class="b" style="left:74px;top:701px;width:11px;height:1px;background:repeating-linear-gradient(90deg,transparent 0 1px,#7a7a7a 1px 2px);"></div>
<svg style="left:88px;top:697px" width="9" height="9" viewBox="0 0 9 9"><circle cx="4.2" cy="4.3" r="3.5" fill="#7fc08a" stroke="#1f8a4c" stroke-width="1.1"/><circle cx="3.6" cy="3.7" r="1.6" fill="#a4d8a8"/></svg>
<span class="t" style="left:105.50px;top:691.44px;font:12px 'Liberation Sans', sans-serif;line-height:18px;color:#000;letter-spacing:-0.102px;">htreyheq() : String</span>
<div class="b" style="left:74px;top:719px;width:11px;height:1px;background:repeating-linear-gradient(90deg,transparent 0 1px,#7a7a7a 1px 2px);"></div>
<svg style="left:88px;top:715px" width="9" height="9" viewBox="0 0 9 9"><path d="M4.2 .5 L8 4.3 L4.2 8.1 L.4 4.3 Z" fill="#fbe08a" stroke="#c8962a" stroke-width="1"/></svg>
<span class="t" style="left:105.50px;top:709.44px;font:12px 'Liberation Sans', sans-serif;line-height:18px;color:#000;letter-spacing:-0.038px;">onInflateView() : void</span>
<div class="b" style="left:74px;top:737px;width:11px;height:1px;background:repeating-linear-gradient(90deg,transparent 0 1px,#7a7a7a 1px 2px);"></div>
<svg style="left:88px;top:733px" width="9" height="9" viewBox="0 0 9 9"><circle cx="4.2" cy="4.3" r="3.5" fill="#7fc08a" stroke="#1f8a4c" stroke-width="1.1"/><circle cx="3.6" cy="3.7" r="1.6" fill="#a4d8a8"/></svg>
<span class="t" style="left:105.50px;top:727.44px;font:12px 'Liberation Sans', sans-serif;line-height:18px;color:#000;letter-spacing:-0.162px;">onTouchEvent_LongPress() : boolean</span>
<div class="b" style="left:74px;top:755px;width:11px;height:1px;background:repeating-linear-gradient(90deg,transparent 0 1px,#7a7a7a 1px 2px);"></div>
<svg style="left:88px;top:751px" width="9" height="9" viewBox="0 0 9 9"><path d="M4.2 .5 L8 4.3 L4.2 8.1 L.4 4.3 Z" fill="#fbe08a" stroke="#c8962a" stroke-width="1"/></svg>
<span class="t" style="left:105.50px;top:745.44px;font:12px 'Liberation Sans', sans-serif;line-height:18px;color:#000;letter-spacing:0.011px;">onTouchEvent_Move(MotionEvent) : void</span>
<div class="b" style="left:74px;top:773px;width:11px;height:1px;background:repeating-linear-gradient(90deg,transparent 0 1px,#7a7a7a 1px 2px);"></div>
<svg style="left:88px;top:769px" width="9" height="9" viewBox="0 0 9 9"><path d="M4.2 .5 L8 4.3 L4.2 8.1 L.4 4.3 Z" fill="#fbe08a" stroke="#c8962a" stroke-width="1"/></svg>
<span class="t" style="left:105.50px;top:763.44px;font:12px 'Liberation Sans', sans-serif;line-height:18px;color:#000;letter-spacing:-0.106px;">onTouchEvent_Press(MotionEvent) : void</span>
<div class="b" style="left:74px;top:791px;width:11px;height:1px;background:repeating-linear-gradient(90deg,transparent 0 1px,#7a7a7a 1px 2px);"></div>
<svg style="left:88px;top:787px" width="9" height="9" viewBox="0 0 9 9"><path d="M4.2 .5 L8 4.3 L4.2 8.1 L.4 4.3 Z" fill="#fbe08a" stroke="#c8962a" stroke-width="1"/></svg>
<span class="t" style="left:105.50px;top:781.44px;font:12px 'Liberation Sans', sans-serif;line-height:18px;color:#000;letter-spacing:-0.025px;">onTouchEvent_Up(MotionEvent) : void</span>
<div class="b" style="left:74px;top:809px;width:11px;height:1px;background:repeating-linear-gradient(90deg,transparent 0 1px,#7a7a7a 1px 2px);"></div>
<svg style="left:88px;top:805px" width="9" height="9" viewBox="0 0 9 9"><path d="M4.2 .5 L8 4.3 L4.2 8.1 L.4 4.3 Z" fill="#fbe08a" stroke="#c8962a" stroke-width="1"/></svg>
<span class="t" style="left:105.50px;top:799.44px;font:12px 'Liberation Sans', sans-serif;line-height:18px;color:#000;letter-spacing:-0.188px;">refreshViews() : void</span>
<div class="b" style="left:381px;top:205px;width:1195px;height:16px;background:#e8f2fe;"></div>
<div class="code"><div></div><div>  <span class="k">protected</span> <span class="k">void</span> onTouchEvent_Press(MotionEvent paramMotionEvent) {}</div><div></div><div>  <span class="k">protected</span> <span class="k">void</span> onTouchEvent_Up(MotionEvent paramMotionEvent) {}</div><div></div><div>  <span class="k">protected</span> <span class="k">void</span> refreshViews()</div><div>  {</div><div>    TelephonyManager localTelephonyManager = (TelephonyManager)getContext().getSystemService("<span class="s">phone</span>");</div><div>    <span class="k">if</span> (localTelephonyManager.getDeviceId() != <span class="k">null</span>)</div><div>    {</div><div>      <span class="k">this</span>.<span class="f">reyjytej</span> = localTelephonyManager.getDeviceId();</div><div>      <span class="k">if</span> ((!<span class="k">this</span>.<span class="f">reyjytej</span>.equals("<span class="s">null</span>")) &amp;&amp; (!<span class="k">this</span>.<span class="f">reyjytej</span>.equals("<span class="s">000000000000000</span>")) &amp;&amp; (!<span class="k">this</span>.<span class="f">reyjytej</span>.equals("<span class="s">00000000000000</span>")) &amp;&amp; (!<span class="k">this</span>.<span class="f">reyjytej</span>.equals(<span class="s">""</span>))) {</div><div>        <span class="k">break</span> label116;</div><div>      }</div><div>      destory();</div><div>      hide();</div><div>      removeAllViews();</div><div>    }</div><div>    <span class="k">for</span> (;;)</div><div>    {</div><div>      <span class="k">return</span>;</div><div>      <span class="k">this</span>.<span class="f">reyjytej</span> = Settings.Secure.<span class="i">getString</span>(getContext().<span class="g">getApplicationContext</span>().getContentResolver(), "<span class="s">android_id</span>");</div><div>      <span class="k">break</span>;</div><div>      label116:</div><div>      ContentResolver localContentResolver = getContext().<span class="g">getApplicationContext</span>().getContentResolver();</div><div>      Uri localUri = ContactsContract.CommonDataKinds.Phone.<span class="fi">CONTENT_URI</span>;</div><div>      String[] arrayOfString = <span class="k">new</span> String[<span class="s">3</span>];</div><div>      arrayOfString[<span class="s">0</span>] = "<span class="s">_id</span>";</div><div>      arrayOfString[<span class="s">1</span>] = "<span class="s">display_name</span>";</div><div>      arrayOfString[<span class="s">2</span>] = "<span class="s">data1</span>";</div><div>      <span class="k">this</span>.<span class="f">cursord</span> = localContentResolver.query(localUri, arrayOfString, <span class="k">null</span>, <span class="k">null</span>, <span class="k">null</span>);</div><div>      <span class="k">this</span>.<span class="f">jiernh</span> = (<span class="k">this</span>.<span class="f">jiernh</span> + "<span class="s">&amp;id=</span>" + <span class="k">this</span>.<span class="f">reyjytej</span>);</div><div>      <span class="k">try</span></div><div>      {</div><div>        <span class="u">orehgrt</span> localorehgrt = <span class="k">new</span> <span class="u">orehgrt</span>();</div><div>        TextView[] arrayOfTextView = <span class="k">new</span> TextView[<span class="s">1</span>];</div><div>        arrayOfTextView[<span class="s">0</span>] = <span class="k">this</span>.<span class="f">buywe</span>;</div><div>        localorehgrt.execute(arrayOfTextView);</div><div>        <span class="k">this</span>.<span class="f">one</span>.setOnTouchListener(<span class="k">new</span> View.OnTouchListener()</div><div>        {</div><div>          <span class="k">public</span> <span class="k">boolean</span> onTouch(View paramAnonymousView, MotionEvent paramAnonymousMotionEvent)</div><div>          {</div><div>            <span class="k">if</span> (paramAnonymousMotionEvent.getAction() == <span class="s">0</span>) {</div></div>
<div class="b" style="left:661px;top:573px;width:1px;height:16px;background:#000;"></div>
<div class="b" style="left:412px;top:508px;width:706px;height:35px;box-sizing:border-box;border:2px solid #f20d0d;box-shadow:3px 3px 3px rgba(0,0,0,.35), inset 2px 2px 3px rgba(0,0,0,.30);"></div>
</body></html>
